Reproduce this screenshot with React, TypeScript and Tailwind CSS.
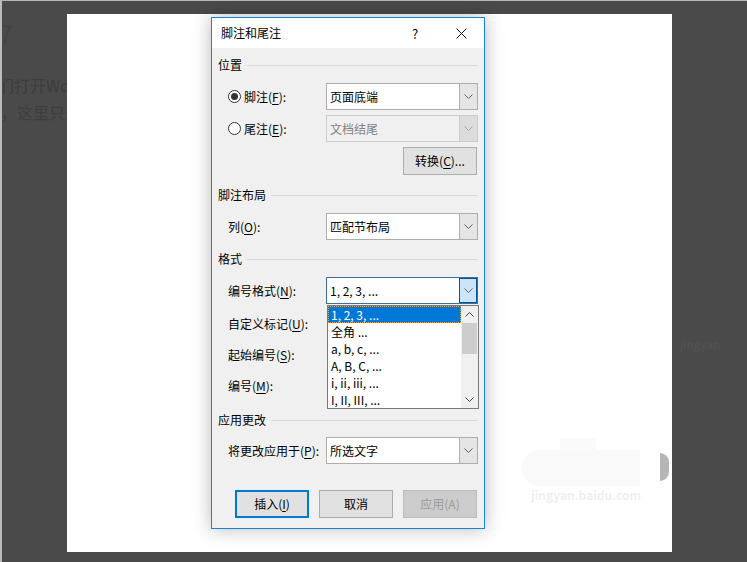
import React from "react";

const font = "font-['Microsoft_YaHei_UI','Noto_Sans_CJK_SC',sans-serif]";

function U({ children }: { children: React.ReactNode }) {
  return <span className="underline underline-offset-[2px] decoration-[1px]">{children}</span>;
}

function Chevron({ up = false, color = "#606060" }: { up?: boolean; color?: string }) {
  return (
    <svg width="9" height="5" viewBox="0 0 9 5" className={up ? "rotate-180" : ""}>
      <path d="M0.5 0.5L4.5 4.5L8.5 0.5" fill="none" stroke={color} strokeWidth="1" />
    </svg>
  );
}

function Section({ title, className = "" }: { title: string; className?: string }) {
  return (
    <div className={`flex items-center h-[16px] ${className}`}>
      <span className="leading-none">{title}</span>
      <div className="flex-1 h-px bg-[#dadada] ml-[5px] mr-px" />
    </div>
  );
}

function Select({ value, state = "normal" }: { value: string; state?: "normal" | "disabled" | "open" }) {
  const box =
    state === "disabled"
      ? "border-[#cccccc] bg-[#f0f0f0] text-[#838383]"
      : state === "open"
      ? "border-[#3f6d9c] bg-white text-black"
      : "border-[#adadad] bg-white text-black";
  const arrow =
    state === "disabled"
      ? "bg-[#dcdcdc] border-[#cccccc]"
      : state === "open"
      ? "bg-[#cce4f7] border-[#005499] border"
      : "bg-[#e5e5e5] border-[#adadad]";
  return (
    <div className={`flex w-[152px] h-[27px] border ${box}`}>
      <div className="flex-1 flex items-center pl-[3px] leading-none">{value}</div>
      <div className={`w-[18px] flex items-center justify-center border-l ${arrow}`}>
        <Chevron color={state === "disabled" ? "#a8a8a8" : "#606060"} />
      </div>
    </div>
  );
}

function Row({ label, children }: { label: React.ReactNode; children?: React.ReactNode }) {
  return (
    <div className="flex items-center h-[27px]">
      <div className="w-[108px] pl-[10px] leading-none">{label}</div>
      {children}
    </div>
  );
}

function Radio({ checked }: { checked: boolean }) {
  return (
    <span className="w-[13px] h-[13px] rounded-full border border-[#333333] bg-white flex items-center justify-center mr-[3px]">
      {checked && <span className="w-[7px] h-[7px] rounded-full bg-[#333333]" />}
    </span>
  );
}

function Button({ children, kind = "normal" }: { children: React.ReactNode; kind?: "normal" | "default" | "disabled" }) {
  const cls =
    kind === "default"
      ? "border-2 border-[#0078d7] bg-[#e1e1e1] text-black"
      : kind === "disabled"
      ? "border border-[#bfbfbf] bg-[#cccccc] text-[#9b9b9b]"
      : "border border-[#adadad] bg-[#e1e1e1] text-black";
  return (
    <div className={`w-[74px] h-[28px] flex items-center justify-center leading-none ${cls}`}>{children}</div>
  );
}

const listItems = ["1, 2, 3, ...", "全角 ...", "a, b, c, ...", "A, B, C, ...", "i, ii, iii, ...", "I, II, III, ..."];

function ListBox() {
  return (
    <div className="absolute left-[115px] top-[287px] w-[152px] h-[104px] border border-[#7a7a7a] bg-white flex">
      <div className="flex-1 flex flex-col">
        {listItems.map((t, i) => (
          <div
            key={t}
            className={`h-[17px] flex items-center pl-[3px] leading-none ${
              i === 0 ? "bg-[#0078d7] text-white outline outline-1 outline-dotted outline-[#f0a040] -outline-offset-1" : "text-black"
            }`}
          >
            {t}
          </div>
        ))}
      </div>
      <div className="w-[17px] bg-[#f0f0f0] flex flex-col items-center">
        <div className="h-[17px] flex items-center justify-center">
          <Chevron up color="#404040" />
        </div>
        <div className="w-[15px] h-[31px] bg-[#cdcdcd]" />
        <div className="flex-1" />
        <div className="h-[17px] flex items-center justify-center">
          <Chevron color="#404040" />
        </div>
      </div>
    </div>
  );
}

function Dialog() {
  return (
    <div className="absolute left-[144px] top-[3px] w-[274px] h-[512px] border border-[#1883d7] bg-[#f0f0f0] shadow-[0_0_18px_rgba(0,0,0,0.28)] text-[12px] text-black flex flex-col">
      <div className="h-[30px] bg-white flex items-center">
        <span className="pl-[9px] flex-1 leading-none">脚注和尾注</span>
        <div className="w-[46px] flex justify-center leading-none text-[13px]">?</div>
        <div className="w-[46px] flex justify-center">
          <svg width="11" height="11" viewBox="0 0 11 11">
            <path d="M0.5 0.5L10.5 10.5M10.5 0.5L0.5 10.5" stroke="#111" strokeWidth="1" />
          </svg>
        </div>
      </div>
      <div className="px-[6px] flex flex-col">
        <Section title="位置" className="mt-[9px]" />
        <div className="mt-[10px]">
          <Row label={<span className="flex items-center"><Radio checked />脚注(<U>F</U>):</span>}>
            <Select value="页面底端" />
          </Row>
        </div>
        <div className="mt-[5px]">
          <Row label={<span className="flex items-center"><Radio checked={false} />尾注(<U>E</U>):</span>}>
            <Select value="文档结尾" state="disabled" />
          </Row>
        </div>
        <div className="mt-[5px] flex justify-end mr-px">
          <Button>转换(<U>C</U>)...</Button>
        </div>
        <Section title="脚注布局" className="mt-[12px]" />
        <div className="mt-[10px]">
          <Row label={<>列(<U>O</U>):</>}>
            <Select value="匹配节布局" />
          </Row>
        </div>
        <Section title="格式" className="mt-[11px]" />
        <div className="mt-[10px]">
          <Row label={<>编号格式(<U>N</U>):</>}>
            <Select value="1, 2, 3, ..." state="open" />
          </Row>
        </div>
        <div className="mt-[12px] h-[16px] pl-[10px] leading-none flex items-center">自定义标记(<U>U</U>):</div>
        <div className="mt-[15px] h-[16px] pl-[10px] leading-none flex items-center">起始编号(<U>S</U>):</div>
        <div className="mt-[15px] h-[16px] pl-[10px] leading-none flex items-center">编号(<U>M</U>):</div>
        <Section title="应用更改" className="mt-[18px]" />
        <div className="mt-[9px]">
          <Row label={<>将更改应用于(<U>P</U>):</>}>
            <Select value="所选文字" />
          </Row>
        </div>
        <div className="mt-[26px] flex justify-end gap-[10px] mr-px">
          <Button kind="default">插入(<U>I</U>)</Button>
          <Button>取消</Button>
          <Button kind="disabled">应用(A)</Button>
        </div>
      </div>
      <ListBox />
    </div>
  );
}

export default function App() {
  return (
    <div className={`w-[747px] h-[562px] bg-[#4a4a4a] overflow-hidden flex flex-col ${font}`}>
      <div className="h-px bg-[#b4b4b4]" />
      <div className="flex flex-1">
        <div className="w-[2px] bg-[#bcbcbc]" />
        <div className="w-[65px] overflow-hidden text-[#3d3d3d] whitespace-nowrap">
          <div className="mt-[18px] -ml-[4px] text-[28px] leading-none text-[#444444]">7</div>
          <div className="mt-[30px] -ml-[4px] text-[16px] leading-none">们打开Word</div>
          <div className="mt-[11px] -ml-[1px] text-[16px] leading-none">，这里只是</div>
          <div className="mt-[160px] -ml-[14px] text-[16px] leading-none">o</div>
        </div>
        <div className="relative w-[605px] h-[538px] mt-[13px] bg-white">
          <div className="absolute left-[455px] top-[436px] w-[118px] h-[36px] rounded-l-full bg-[#f9f9f9]" />
          <div className="absolute left-[493px] top-[424px] w-[36px] h-[14px] bg-[#fafafa]" />
          <div className="absolute left-[464px] top-[475px] text-[12px] font-bold leading-none text-[#efefef]">jingyan.baidu.com</div>
          <div className="absolute left-[593px] top-[439px] w-[9px] h-[28px] rounded-r-full bg-[#b5b5b5]" />
          <Dialog />
        </div>
        <div className="flex-1 pl-[8px] pt-[338px] text-[11px] font-bold leading-none text-[#515151]">
          <div>jingyan</div>
        </div>
      </div>
    </div>
  );
}
